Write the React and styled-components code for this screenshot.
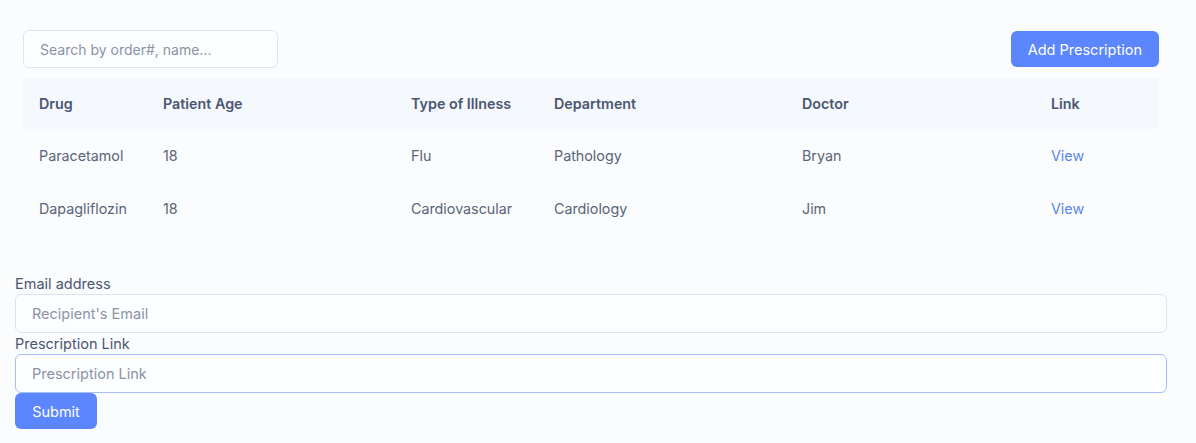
import React from 'react'
import styled, { createGlobalStyle } from 'styled-components'

const GlobalStyle = createGlobalStyle`
  body {
    margin: 0;
    background: #fbfcfd;
    font-family: Inter, "Noto Sans", sans-serif;
    color: #4b5670;
  }
  * { box-sizing: border-box; }
`

const Page = styled.div`
  padding-top: 30px;
`

const ListSection = styled.div`
  padding: 0 37px 0 23px;
`

const Toolbar = styled.div`
  display: flex;
  justify-content: space-between;
  align-items: center;
  margin-bottom: 10px;
`

const SearchInput = styled.input`
  width: 255px;
  height: 38px;
  border: 1px solid #e1e5f0;
  border-radius: 6px;
  background: #fdfeff;
  padding: 0 16px;
  font-family: inherit;
  font-size: 14px;
  color: #4b5670;
  outline: none;
  &::placeholder { color: #8a93a6; }
`

const Button = styled.button`
  height: 36px;
  padding: 0 17px;
  border: none;
  border-radius: 6px;
  background: #5b86fd;
  color: #ffffff;
  font-family: inherit;
  font-size: 14.5px;
  cursor: pointer;
`

const Table = styled.table`
  width: 100%;
  border-collapse: collapse;
  table-layout: fixed;
  font-size: 14.3px;
`

const HeadRow = styled.tr`
  background: #f5f8fc;
  height: 51px;
`

const Th = styled.th`
  text-align: left;
  font-weight: 600;
  color: #4b5670;
  padding: 0 16px;
  width: ${p => p.$w || 'auto'};
`

const Row = styled.tr`
  height: 53px;
`

const Td = styled.td`
  padding: 0 16px;
  color: #5a6478;
`

const ViewLink = styled.a`
  color: #5b86e8;
  text-decoration: none;
`

const Form = styled.form`
  display: flex;
  flex-direction: column;
  align-items: flex-start;
  padding: 38px 29px 0 15px;
`

const Label = styled.label`
  font-size: 14.5px;
  line-height: 21px;
  color: #4b5670;
`

const TextInput = styled.input`
  width: 100%;
  height: 39px;
  border: 1px solid ${p => (p.$active ? '#a9bcfb' : '#dfe4f3')};
  border-radius: 6px;
  background: #fdfeff;
  padding: 0 16px;
  font-family: inherit;
  font-size: 14.5px;
  color: #4b5670;
  outline: none;
  &::placeholder { color: #8a93a6; }
`

const SubmitButton = styled(Button)`
  width: 82px;
  padding: 0;
`

const rows = [
  { drug: 'Paracetamol', age: 18, illness: 'Flu', dept: 'Pathology', doctor: 'Bryan' },
  { drug: 'Dapagliflozin', age: 18, illness: 'Cardiovascular', dept: 'Cardiology', doctor: 'Jim' },
]

export default function App() {
  return (
    <Page>
      <GlobalStyle />
      <ListSection>
        <Toolbar>
          <SearchInput placeholder="Search by order#, name..." />
          <Button>Add Prescription</Button>
        </Toolbar>
        <Table>
          <thead>
            <HeadRow>
              <Th $w="124px">Drug</Th>
              <Th $w="248px">Patient Age</Th>
              <Th $w="143px">Type of Illness</Th>
              <Th $w="248px">Department</Th>
              <Th $w="249px">Doctor</Th>
              <Th>Link</Th>
            </HeadRow>
          </thead>
          <tbody>
            {rows.map(r => (
              <Row key={r.drug}>
                <Td>{r.drug}</Td>
                <Td>{r.age}</Td>
                <Td>{r.illness}</Td>
                <Td>{r.dept}</Td>
                <Td>{r.doctor}</Td>
                <Td><ViewLink href="#">View</ViewLink></Td>
              </Row>
            ))}
          </tbody>
        </Table>
      </ListSection>
      <Form onSubmit={e => e.preventDefault()}>
        <Label htmlFor="email">Email address</Label>
        <TextInput id="email" placeholder="Recipient's Email" />
        <Label htmlFor="link">Prescription Link</Label>
        <TextInput id="link" $active autoFocus placeholder="Prescription Link" />
        <SubmitButton type="submit">Submit</SubmitButton>
      </Form>
    </Page>
  )
}
